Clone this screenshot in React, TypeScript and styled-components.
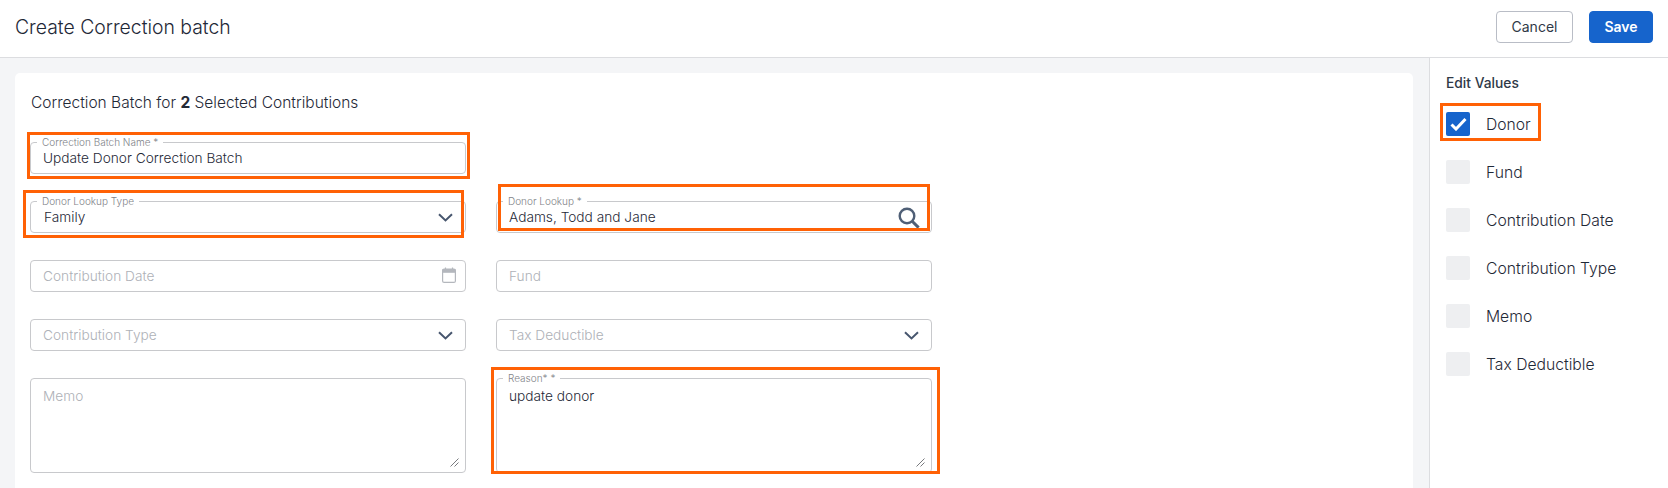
import { createGlobalStyle } from 'styled-components';
import styled from 'styled-components';

const GlobalStyle = createGlobalStyle`
    html, body {
        margin: 0;
        height: 100%;
        overflow: hidden;
        background: #fff;
    }

    body, input, textarea, button {
        font-family: 'Inter', 'Open Sans', sans-serif;
    }
`;

const Page = styled.div`
    display: flex;
    flex-direction: column;
    width: 1668px;
    height: 488px;
    overflow: hidden;
    color: #36404e;
`;

const Header = styled.header`
    display: flex;
    align-items: center;
    justify-content: space-between;
    box-sizing: border-box;
    height: 58px;
    padding: 0 15px 4px 15px;
    border-bottom: 1px solid #dcdde0;
    flex-shrink: 0;
`;

const Title = styled.h1`
    margin: 0;
    font-size: 19.4px;
    font-weight: 300;
    color: #1f2937;
`;

const Actions = styled.div`
    display: flex;
    gap: 16px;
`;

const ActionButton = styled.button<{ $primary?: boolean }>`
    height: 32px;
    width: ${(p) => (p.$primary ? '64px' : '77px')};
    border-radius: 4px;
    border: 1px solid ${(p) => (p.$primary ? '#1664cc' : '#b9bdc6')};
    background: ${(p) => (p.$primary ? '#1664cc' : '#fff')};
    color: ${(p) => (p.$primary ? '#fff' : '#2f3947')};
    font-size: 14px;
    font-weight: ${(p) => (p.$primary ? 600 : 400)};
    padding: 0;
`;

const Body = styled.div`
    display: flex;
    flex: 1;
    min-height: 0;
`;

const Main = styled.main`
    box-sizing: border-box;
    width: 1429px;
    padding: 15px 16px 0 15px;
    background: #f4f5f7;
`;

const Card = styled.section`
    box-sizing: border-box;
    height: 100%;
    padding: 20px 15px 0 15px;
    background: #fff;
    border-radius: 5px 5px 0 0;
`;

const Intro = styled.p`
    margin: 0 0 29px 1px;
    font-size: 15.5px;
    font-weight: 300;
    line-height: 20px;
    color: #1f2937;

    strong {
        font-weight: 700;
        color: #232a35;
    }
`;

const FormGrid = styled.div`
    display: grid;
    grid-template-columns: 436px 436px;
    grid-auto-rows: 32px;
    column-gap: 30px;
    row-gap: 27px;
`;

const Field = styled.div<{ $tall?: boolean }>`
    position: relative;
    ${(p) => (p.$tall ? 'height: 95px;' : '')}
`;

const TextBox = styled.input<{ $select?: boolean }>`
    box-sizing: border-box;
    width: 100%;
    height: 32px;
    padding: 0 12px 0 ${(p) => (p.$select ? '13px' : '12px')};
    border: 1px solid #c8c9cc;
    border-radius: 4px;
    outline: none;
    background: transparent;
    font-size: 13.7px;
    font-weight: 300;
    color: #1f2937;

    &::placeholder {
        color: #aeb1b7;
        opacity: 1;
    }
`;

const MemoBox = styled.textarea`
    display: block;
    box-sizing: border-box;
    width: 100%;
    height: 95px;
    padding: 8px 12px;
    border: 1px solid #c8c9cc;
    border-radius: 4px;
    outline: none;
    resize: none;
    background: transparent;
    font-size: 13.7px;
    font-weight: 300;
    line-height: 18px;
    color: #1f2937;

    &::placeholder {
        color: #aeb1b7;
        opacity: 1;
    }
`;

const FloatingLabel = styled.label`
    position: absolute;
    top: -7px;
    left: 7px;
    padding: 0 5px;
    background: #fff;
    font-size: 10px;
    font-weight: 300;
    line-height: 14px;
    color: #7f8389;
`;

const FieldIcon = styled.svg<{ $top: number; $right: number }>`
    position: absolute;
    top: ${(p) => p.$top}px;
    right: ${(p) => p.$right}px;
`;

const Highlight = styled.div<{ $inset: string }>`
    position: absolute;
    inset: ${(p) => p.$inset};
    border: 3px solid #ff6105;
    pointer-events: none;
`;

const Sidebar = styled.aside`
    box-sizing: border-box;
    flex: 1;
    padding: 16px 0 0 16px;
    border-left: 1px solid #dcdde0;
`;

const SidebarTitle = styled.h2`
    margin: 0 0 20px 0;
    font-size: 13.8px;
    font-weight: 500;
    line-height: 18px;
    color: #2f3947;
`;

const CheckList = styled.ul`
    display: flex;
    flex-direction: column;
    gap: 24px;
    margin: 0;
    padding: 0;
    list-style: none;
`;

const CheckRow = styled.li`
    position: relative;
    display: flex;
    align-items: center;
    gap: 16px;
    width: fit-content;
    height: 24px;
    font-size: 15.7px;
    font-weight: 300;
    color: #1f2937;
`;

const CheckBox = styled.span<{ $checked?: boolean }>`
    display: flex;
    align-items: center;
    justify-content: center;
    width: 24px;
    height: 24px;
    border-radius: 2px;
    background: ${(p) => (p.$checked ? '#1664cc' : '#eeeff1')};
`;

function Chevron() {
    return (
        <FieldIcon $top={12} $right={13} width="15" height="9" viewBox="0 0 15 9" fill="none">
            <path d="M1 1.2 L7.5 7.4 L14 1.2" stroke="#47566e" strokeWidth="2" />
        </FieldIcon>
    );
}

function Calendar() {
    return (
        <FieldIcon $top={7} $right={10} width="14" height="16" viewBox="0 0 14 16" fill="none">
            <path d="M3.5 0.5 V3 M10.5 0.5 V3" stroke="#b4b7bd" strokeWidth="1.2" />
            <rect x="0.6" y="2" width="12.8" height="13.4" rx="1.5" stroke="#b4b7bd" strokeWidth="1.2" />
            <rect x="0.6" y="2" width="12.8" height="3.8" fill="#b4b7bd" />
        </FieldIcon>
    );
}

function Search() {
    return (
        <FieldIcon $top={6} $right={12} width="22" height="22" viewBox="0 0 22 22" fill="none">
            <circle cx="9" cy="9" r="7.3" stroke="#4f5f76" strokeWidth="2.4" />
            <path d="M14.2 14.2 L20.6 20.6" stroke="#4f5f76" strokeWidth="3" />
        </FieldIcon>
    );
}

function ResizeGrip() {
    return (
        <FieldIcon $top={80} $right={7} width="9" height="9" viewBox="0 0 9 9" fill="none">
            <path d="M0.5 8.5 L8.5 0.5 M4.5 8.5 L8.5 4.5" stroke="#55585d" strokeWidth="0.8" />
        </FieldIcon>
    );
}

const checks = ['Donor', 'Fund', 'Contribution Date', 'Contribution Type', 'Memo', 'Tax Deductible'];

export default function App() {
    return (
        <Page>
            <GlobalStyle />
            <Header>
                <Title>Create Correction batch</Title>
                <Actions>
                    <ActionButton>Cancel</ActionButton>
                    <ActionButton $primary>Save</ActionButton>
                </Actions>
            </Header>
            <Body>
                <Main>
                    <Card>
                        <Intro>
                            Correction Batch for <strong>2</strong> Selected Contributions
                        </Intro>
                        <FormGrid>
                            <Field>
                                <FloatingLabel>Correction Batch Name *</FloatingLabel>
                                <TextBox readOnly value="Update Donor Correction Batch" />
                                <Highlight $inset="-10px -4px -5px -3px" />
                            </Field>
                            <div />
                            <Field>
                                <FloatingLabel>Donor Lookup Type</FloatingLabel>
                                <TextBox $select readOnly value="Family" />
                                <Chevron />
                                <Highlight $inset="-11px 2px -5px -7px" />
                            </Field>
                            <Field>
                                <FloatingLabel>Donor Lookup *</FloatingLabel>
                                <TextBox readOnly value="Adams, Todd and Jane" />
                                <Search />
                                <Highlight $inset="-17px 2px 2px 2px" />
                            </Field>
                            <Field>
                                <TextBox readOnly placeholder="Contribution Date" />
                                <Calendar />
                            </Field>
                            <Field>
                                <TextBox readOnly placeholder="Fund" />
                            </Field>
                            <Field>
                                <TextBox readOnly placeholder="Contribution Type" />
                                <Chevron />
                            </Field>
                            <Field>
                                <TextBox readOnly placeholder="Tax Deductible" />
                                <Chevron />
                            </Field>
                            <Field $tall>
                                <MemoBox readOnly placeholder="Memo" />
                                <ResizeGrip />
                            </Field>
                            <Field $tall>
                                <FloatingLabel>Reason* *</FloatingLabel>
                                <MemoBox readOnly value="update donor" />
                                <ResizeGrip />
                                <Highlight $inset="-11px -8px -1px -5px" />
                            </Field>
                        </FormGrid>
                    </Card>
                </Main>
                <Sidebar>
                    <SidebarTitle>Edit Values</SidebarTitle>
                    <CheckList>
                        {checks.map((label, index) => (
                            <CheckRow key={label}>
                                <CheckBox $checked={index === 0}>
                                    {index === 0 && (
                                        <svg width="17" height="14" viewBox="0 0 17 14" fill="none">
                                            <path d="M1.5 7.5 L6 12 L15.5 2" stroke="#fff" strokeWidth="3" />
                                        </svg>
                                    )}
                                </CheckBox>
                                {label}
                                {index === 0 && <Highlight $inset="-9px -10px -5px -6px" />}
                            </CheckRow>
                        ))}
                    </CheckList>
                </Sidebar>
            </Body>
        </Page>
    );
}
